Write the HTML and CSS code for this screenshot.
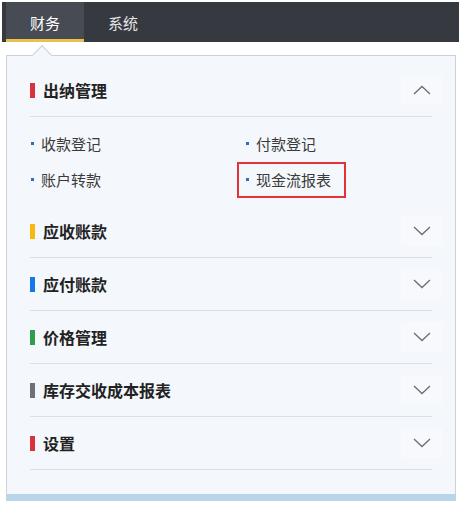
FILE: index.html
```html
<!DOCTYPE html>
<html>
	<head>
		<meta charset="utf-8" />
		<title>财务</title>
		<link rel="stylesheet" href="styles.css">
	</head>
	<body>
		<div class="top-bar">
			<a class="tab active" href="javascript:;">财务</a>
			<a class="tab" href="javascript:;">系统</a>
		</div>
		<div class="panel">
			<i class="caret"></i>
			<div class="group open">
				<div class="group-head">
					<span class="mark red"></span>
					<span class="title">出纳管理</span>
					<span class="toggle">
						<svg width="18" height="10" viewBox="0 0 18 10"><polyline points="1,9 9,1.5 17,9" /></svg>
					</span>
				</div>
				<ul class="sub-list">
					<li><a href="javascript:;"><i class="dot"></i>收款登记</a></li>
					<li><a href="javascript:;"><i class="dot"></i>付款登记</a></li>
					<li><a href="javascript:;"><i class="dot"></i>账户转款</a></li>
					<li><a class="current" href="javascript:;"><i class="dot"></i>现金流报表</a></li>
				</ul>
			</div>
			<div class="group">
				<div class="group-head">
					<span class="mark yellow"></span>
					<span class="title">应收账款</span>
					<span class="toggle">
						<svg width="18" height="10" viewBox="0 0 18 10"><polyline points="1,1 9,8.5 17,1" /></svg>
					</span>
				</div>
			</div>
			<div class="group">
				<div class="group-head">
					<span class="mark blue"></span>
					<span class="title">应付账款</span>
					<span class="toggle">
						<svg width="18" height="10" viewBox="0 0 18 10"><polyline points="1,1 9,8.5 17,1" /></svg>
					</span>
				</div>
			</div>
			<div class="group">
				<div class="group-head">
					<span class="mark green"></span>
					<span class="title">价格管理</span>
					<span class="toggle">
						<svg width="18" height="10" viewBox="0 0 18 10"><polyline points="1,1 9,8.5 17,1" /></svg>
					</span>
				</div>
			</div>
			<div class="group">
				<div class="group-head">
					<span class="mark gray"></span>
					<span class="title">库存交收成本报表</span>
					<span class="toggle">
						<svg width="18" height="10" viewBox="0 0 18 10"><polyline points="1,1 9,8.5 17,1" /></svg>
					</span>
				</div>
			</div>
			<div class="group">
				<div class="group-head">
					<span class="mark red"></span>
					<span class="title">设置</span>
					<span class="toggle">
						<svg width="18" height="10" viewBox="0 0 18 10"><polyline points="1,1 9,8.5 17,1" /></svg>
					</span>
				</div>
			</div>
		</div>
	</body>
</html>
```

FILE: styles.css
```css
* {
	padding: 0;
	margin: 0;
	box-sizing: border-box;
}
body {
	background-color: #ffffff;
	font-family: "Noto Sans CJK SC", "Noto Sans", sans-serif;
	padding-top: 2px;
}
a {
	text-decoration: none;
}
ul {
	list-style: none;
}
.top-bar {
	display: flex;
	height: 40px;
	margin: 0 2px;
	background-color: #363940;
}
.tab {
	display: flex;
	align-items: center;
	justify-content: center;
	width: 78px;
	height: 40px;
	font-size: 15px;
	color: #e2e4e8;
}
.tab.active {
	margin-left: 4px;
	color: #ffffff;
	background-color: #474b53;
	border-bottom: 3px solid #e9c14c;
	padding-top: 3px;
}
.panel {
	position: relative;
	margin: 13px 5px 0 6px;
	padding: 8px 23px 24px;
	background-color: #f4f7fc;
	border: 1px solid #cdd2da;
	border-bottom: 7px solid #b9d6e8;
}
/* 顶部小三角 */
.caret {
	position: absolute;
	top: -8px;
	left: 28px;
	width: 14px;
	height: 14px;
	background-color: #f4f7fc;
	border-top: 1px solid #cdd2da;
	border-left: 1px solid #cdd2da;
	transform: rotate(45deg);
}
.group-head {
	display: flex;
	align-items: center;
	height: 53px;
	border-bottom: 1px solid #dbe0e8;
	cursor: pointer;
}
.mark {
	width: 5px;
	height: 15px;
	margin-right: 8px;
}
.mark.red {
	background-color: #d8333d;
}
.mark.yellow {
	background-color: #f6b90f;
}
.mark.blue {
	background-color: #1677e8;
}
.mark.green {
	background-color: #2f9e4a;
}
.mark.gray {
	background-color: #6d7078;
}
.title {
	flex: 1;
	font-size: 16px;
	font-weight: bold;
	color: #222222;
}
.toggle {
	display: flex;
	align-items: center;
	justify-content: center;
	width: 42px;
	height: 30px;
	margin-right: -11px;
	background-color: rgba(255, 255, 255, 0.25);
}
.toggle svg {
	fill: none;
	stroke: #6a6d74;
	stroke-width: 1.3;
}
/* 展开的子菜单 */
.sub-list {
	display: grid;
	grid-template-columns: 215px 1fr;
	grid-template-rows: 36px 36px;
	margin: 9px -8px 7px;
}
.sub-list li {
	display: flex;
}
.sub-list a {
	display: flex;
	align-items: center;
	gap: 7px;
	padding: 0 13px 1px 7px;
	border: 2px solid transparent;
	font-size: 15px;
	color: #3a3a3a;
}
.sub-list a.current {
	border-color: #e0333a;
}
.dot {
	display: block;
	width: 3px;
	height: 3px;
	background-color: #2a6fc0;
}
```
